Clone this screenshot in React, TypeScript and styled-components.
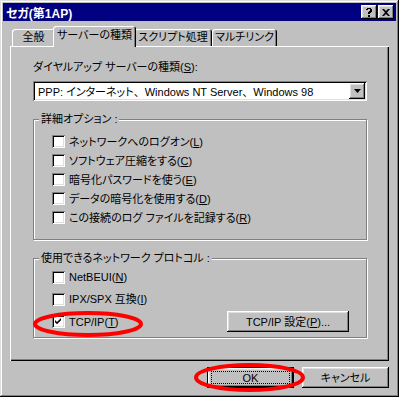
import styled, { createGlobalStyle, css } from "styled-components";

const GlobalStyle = createGlobalStyle`
  html, body { margin: 0; padding: 0; background: #c0c0c0; }
  body {
    font-family: "Liberation Sans", "Noto Sans CJK JP", sans-serif;
    font-size: 11px;
    font-feature-settings: "palt";
    color: #000;
  }
  u { text-decoration-thickness: 1px; text-underline-offset: 1px; }
`;

const raised = css`
  box-shadow: inset -1px -1px #000, inset 1px 1px #fff, inset -2px -2px #808080, inset 2px 2px #dfdfdf;
`;

const sunken = css`
  box-shadow: inset 1px 1px #808080, inset -1px -1px #fff, inset 2px 2px #000, inset -2px -2px #dfdfdf;
`;

const Window = styled.div`
  position: relative;
  width: 399px;
  height: 397px;
  box-sizing: border-box;
  padding: 3px;
  background: #c0c0c0;
  box-shadow: inset -1px -1px #000, inset 1px 1px #dfdfdf, inset -2px -2px #808080, inset 2px 2px #fff;
  display: flex;
  flex-direction: column;
`;

const TitleBar = styled.div`
  height: 18px;
  flex: none;
  background: #000080;
  color: #fff;
  font-weight: bold;
  font-size: 12px;
  display: flex;
  align-items: center;
  justify-content: space-between;
  padding: 0 2px 0 3px;
`;

const TitleButtons = styled.div`
  display: flex;
  gap: 1px;
`;

const TitleButton = styled.div`
  width: 16px;
  height: 14px;
  background: #c0c0c0;
  ${raised};
  display: flex;
  align-items: center;
  justify-content: center;
`;

const Body = styled.div`
  flex: 1;
  display: flex;
  flex-direction: column;
  padding: 5px 7px 0;
`;

const TabStrip = styled.div`
  height: 20px;
  display: flex;
  align-items: flex-end;
  padding-left: 2px;
  position: relative;
  z-index: 1;
`;

const Tab = styled.div<{ $w: number; $active?: boolean }>`
  box-sizing: border-box;
  width: ${(p) => p.$w}px;
  height: ${(p) => (p.$active ? 21 : 17)}px;
  margin: ${(p) => (p.$active ? "0 -2px -1px" : "0")};
  padding-top: ${(p) => (p.$active ? 2 : 1)}px;
  background: #c0c0c0;
  border-radius: 3px 3px 0 0;
  box-shadow: inset 1px 1px #fff, inset -1px 0 #000, inset -2px 0 #808080;
  text-align: center;
  white-space: nowrap;
  overflow: hidden;
  line-height: 14px;
  position: relative;
  z-index: ${(p) => (p.$active ? 2 : 0)};
`;

const Panel = styled.div`
  height: 315px;
  flex: none;
  box-sizing: border-box;
  padding: 14px 22px 0 23px;
  box-shadow: inset 1px 1px #fff, inset -1px -1px #000, inset -2px -2px #808080;
  display: flex;
  flex-direction: column;
`;

const Label = styled.div`
  line-height: 14px;
  height: 14px;
`;

const Select = styled.div`
  margin-top: 7px;
  height: 20px;
  box-sizing: border-box;
  padding: 2px;
  background: #fff;
  ${sunken};
  display: flex;
  align-items: center;
`;

const SelectText = styled.div`
  flex: 1;
  padding-left: 3px;
  white-space: nowrap;
`;

const Comma = styled.span`
  font-feature-settings: normal;
`;

const ArrowButton = styled.div`
  width: 16px;
  height: 16px;
  background: #c0c0c0;
  ${raised};
  display: flex;
  align-items: center;
  justify-content: center;
`;

const GroupBox = styled.div<{ $top: number }>`
  margin-top: ${(p) => p.$top}px;
  border: 1px solid #808080;
  box-shadow: inset 1px 1px #fff, 1px 1px #fff;
  display: flex;
  flex-direction: column;
  align-items: flex-start;
`;

const Legend = styled.div`
  margin: -8px 0 0 5px;
  padding: 0 2px;
  height: 14px;
  line-height: 14px;
  background: #c0c0c0;
  white-space: nowrap;
`;

const Rows = styled.div<{ $pt: number; $pb: number }>`
  align-self: stretch;
  padding: ${(p) => p.$pt}px 17px ${(p) => p.$pb}px 18px;
  display: flex;
  flex-direction: column;
`;

const Row = styled.div<{ $h: number }>`
  height: ${(p) => p.$h}px;
  display: flex;
  align-items: center;
  justify-content: space-between;
`;

const CheckLabel = styled.label`
  display: flex;
  align-items: center;
  gap: 4px;
  white-space: nowrap;
  line-height: 14px;
`;

const Box = styled.span`
  width: 13px;
  height: 13px;
  flex: none;
  background: #fff;
  ${sunken};
  display: flex;
  align-items: center;
  justify-content: center;
`;

const PushButton = styled.div<{ $w: number; $default?: boolean }>`
  position: relative;
  box-sizing: border-box;
  width: ${(p) => p.$w}px;
  height: 21px;
  background: #c0c0c0;
  display: flex;
  align-items: center;
  justify-content: center;
  line-height: 14px;
  ${(p) =>
    p.$default
      ? css`
          box-shadow: inset 0 0 0 1px #000, inset -2px -2px #000, inset 2px 2px #fff, inset -3px -3px #808080,
            inset 3px 3px #dfdfdf;
        `
      : raised};
`;

const Focus = styled.span`
  position: absolute;
  inset: 4px;
  border: 1px dotted #000;
`;

const ButtonRow = styled.div`
  margin-top: 6px;
  display: flex;
  justify-content: flex-end;
  gap: 8px;
`;

const Overlay = styled.svg`
  position: absolute;
  left: 0;
  top: 0;
  pointer-events: none;
`;

const Check = () => (
  <svg width="7" height="7" viewBox="0 0 7 7">
    <path d="M0 2 L2 4 L6 0 L6 2.2 L2 6.2 L0 4.2 Z" fill="#000" />
  </svg>
);

const CheckBox = ({ checked, children }: { checked?: boolean; children: React.ReactNode }) => (
  <CheckLabel>
    <Box>{checked && <Check />}</Box>
    <span>{children}</span>
  </CheckLabel>
);

const options = [
  <>ネットワークへのログオン(<u>L</u>)</>,
  <>ソフトウェア圧縮をする(<u>C</u>)</>,
  <>暗号化パスワードを使う(<u>E</u>)</>,
  <>データの暗号化を使用する(<u>D</u>)</>,
  <>この接続のログ ファイルを記録する(<u>R</u>)</>,
];

export default function App() {
  return (
    <>
      <GlobalStyle />
      <Window>
        <TitleBar>
          <span>セガ(第1AP)</span>
          <TitleButtons>
            <TitleButton>
              <svg width="8" height="9" viewBox="0 0 8 9">
                <path d="M1 1h1V0h4v1h1v3H6v1H5v1H3V4h1V3h1V1H3v1H1z M3 7h2v2H3z" fill="#000" />
              </svg>
            </TitleButton>
            <TitleButton>
              <svg width="8" height="7" viewBox="0 0 8 7">
                <path d="M0 0h2l2 2 2-2h2L5 3.5 8 7H6L4 5 2 7H0l3-3.5z" fill="#000" />
              </svg>
            </TitleButton>
          </TitleButtons>
        </TitleBar>
        <Body>
          <TabStrip>
            <Tab $w={43}>全般</Tab>
            <Tab $w={83} $active>サーバーの種類</Tab>
            <Tab $w={78}>スクリプト処理</Tab>
            <Tab $w={65}>マルチリンク</Tab>
          </TabStrip>
          <Panel>
            <Label>
              ダイヤルアップ サーバーの種類(<u>S</u>):
            </Label>
            <Select>
              <SelectText>
                PPP: インターネット<Comma>、</Comma>Windows NT Server<Comma>、</Comma>Windows 98
              </SelectText>
              <ArrowButton>
                <svg width="7" height="4" viewBox="0 0 7 4">
                  <path d="M0 0h7L3.5 4z" fill="#000" />
                </svg>
              </ArrowButton>
            </Select>
            <GroupBox $top={18}>
              <Legend>詳細オプション :</Legend>
              <Rows $pt={6} $pb={12}>
                {options.map((o, i) => (
                  <Row key={i} $h={19}>
                    <CheckBox>{o}</CheckBox>
                  </Row>
                ))}
              </Rows>
            </GroupBox>
            <GroupBox $top={18}>
              <Legend>使用できるネットワーク プロトコル :</Legend>
              <Rows $pt={1} $pb={4}>
                <Row $h={22}>
                  <CheckBox>
                    NetBEUI(<u>N</u>)
                  </CheckBox>
                </Row>
                <Row $h={22}>
                  <CheckBox>
                    IPX/SPX 互換(<u>I</u>)
                  </CheckBox>
                </Row>
                <Row $h={23}>
                  <CheckBox checked>
                    TCP/IP(<u>T</u>)
                  </CheckBox>
                  <PushButton $w={122}>
                    TCP/IP 設定(<u>P</u>)...
                  </PushButton>
                </Row>
              </Rows>
            </GroupBox>
          </Panel>
          <ButtonRow>
            <PushButton $w={87} $default>
              <Focus />
              OK
            </PushButton>
            <PushButton $w={87}>キャンセル</PushButton>
          </ButtonRow>
        </Body>
        <Overlay width="399" height="397" viewBox="0 0 399 397">
          <ellipse cx="88" cy="324" rx="53" ry="11" fill="none" stroke="#f00" strokeWidth="4" />
          <ellipse cx="249.5" cy="377.5" rx="53.5" ry="12.5" fill="none" stroke="#f00" strokeWidth="4" />
        </Overlay>
      </Window>
    </>
  );
}
